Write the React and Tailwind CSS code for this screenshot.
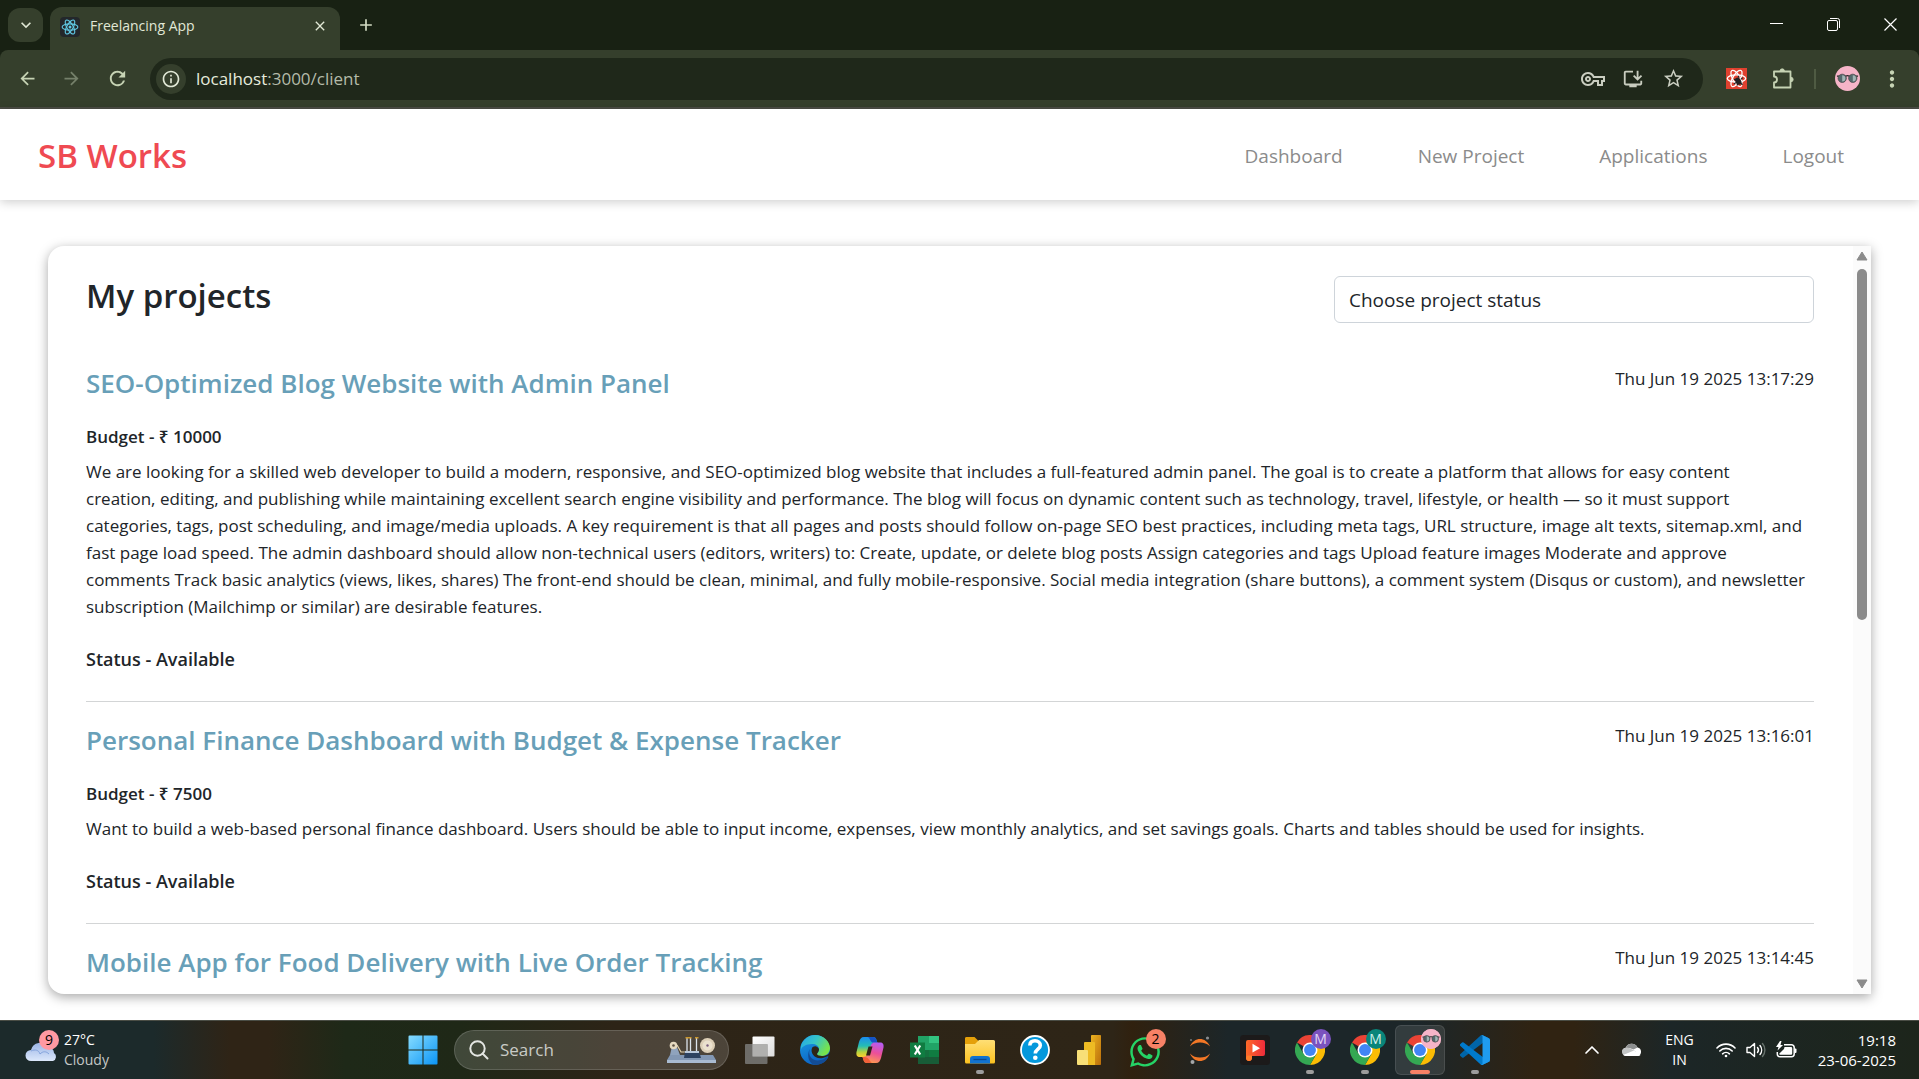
import React from "react";
import {
  MdArrowBack,
  MdArrowForward,
  MdRefresh,
  MdOutlineInfo,
  MdOutlineVpnKey,
  MdOutlineInstallDesktop,
  MdStarBorder,
  MdOutlineExtension,
  MdMoreVert,
  MdAdd,
  MdClose,
  MdKeyboardArrowDown,
} from "react-icons/md";
import { FaWhatsapp } from "react-icons/fa";

const projects = [
  {
    title: "SEO-Optimized Blog Website with Admin Panel",
    date: "Thu Jun 19 2025 13:17:29",
    budget: "10000",
    lines: [
      "We are looking for a skilled web developer to build a modern, responsive, and SEO-optimized blog website that includes a full-featured admin panel. The goal is to create a platform that allows for easy content",
      "creation, editing, and publishing while maintaining excellent search engine visibility and performance. The blog will focus on dynamic content such as technology, travel, lifestyle, or health — so it must support",
      "categories, tags, post scheduling, and image/media uploads. A key requirement is that all pages and posts should follow on-page SEO best practices, including meta tags, URL structure, image alt texts, sitemap.xml, and",
      "fast page load speed. The admin dashboard should allow non-technical users (editors, writers) to: Create, update, or delete blog posts Assign categories and tags Upload feature images Moderate and approve",
      "comments Track basic analytics (views, likes, shares) The front-end should be clean, minimal, and fully mobile-responsive. Social media integration (share buttons), a comment system (Disqus or custom), and newsletter",
      "subscription (Mailchimp or similar) are desirable features.",
    ],
    status: "Available",
  },
  {
    title: "Personal Finance Dashboard with Budget & Expense Tracker",
    date: "Thu Jun 19 2025 13:16:01",
    budget: "7500",
    lines: [
      "Want to build a web-based personal finance dashboard. Users should be able to input income, expenses, view monthly analytics, and set savings goals. Charts and tables should be used for insights.",
    ],
    status: "Available",
  },
  {
    title: "Mobile App for Food Delivery with Live Order Tracking",
    date: "Thu Jun 19 2025 13:14:45",
  },
];

function ReactMark({ className, stroke, width = 1.5 }) {
  return (
    <svg viewBox="0 0 24 24" className={className} fill="none" stroke={stroke} strokeWidth={width}>
      <ellipse cx="12" cy="12" rx="10.5" ry="4.2" />
      <ellipse cx="12" cy="12" rx="10.5" ry="4.2" transform="rotate(60 12 12)" />
      <ellipse cx="12" cy="12" rx="10.5" ry="4.2" transform="rotate(120 12 12)" />
      <circle cx="12" cy="12" r="2" fill={stroke} stroke="none" />
    </svg>
  );
}

function Glasses({ className }) {
  return (
    <svg viewBox="0 0 26 26" className={className}>
      <circle cx="13" cy="13" r="13" fill="#f6b4c8" />
      <path d="M2 10.5h9.500q1.500-1 3 0H24" stroke="#222" strokeWidth="1.300" fill="none" />
      <circle cx="7.500" cy="12.800" r="4.300" fill="#55686c" stroke="#4a4a4a" strokeWidth=".8" />
      <circle cx="18.500" cy="12.800" r="4.300" fill="#55686c" stroke="#4a4a4a" strokeWidth=".8" />
      <path d="M7.500 9.500a3.300 3.300 0 0 1 0 6.600zM18.500 9.500a3.300 3.300 0 0 1 0 6.600z" fill="#a3b5b5" />
    </svg>
  );
}

function TabStrip() {
  return (
    <div className="flex h-[50px] items-end bg-[#182113]">
      <button aria-label="Search tabs" className="mb-2 ml-2 flex h-[34px] w-[35px] shrink-0 items-center justify-center rounded-xl bg-[#353f2c] text-[#dfe6d3]">
        <MdKeyboardArrowDown className="size-5" />
      </button>
      <div className="ml-[7px] flex h-[43px] w-[290px] items-center rounded-t-xl bg-[#353f2c] pr-[10px] pl-[10px]">
        <span className="mb-1 flex size-5 items-center justify-center rounded-sm bg-[#23272b]">
          <ReactMark className="size-[18px]" stroke="#61c9e6" />
        </span>
        <span className="mb-[6px] ml-[10px] flex-1 text-[14px] leading-5 text-[#e1e8d6]">Freelancing App</span>
        <button aria-label="Close tab" className="mb-[6px] flex size-5 items-center justify-center text-[#e1e8d6]">
          <MdClose className="size-4" />
        </button>
      </div>
      <button aria-label="New tab" className="mb-[15px] ml-4 flex size-5 items-center justify-center text-[#d3dcc4]">
        <MdAdd className="size-5" />
      </button>
      <div className="ml-auto flex h-12 text-white self-start">
        <button aria-label="Minimize" className="flex w-[57px] items-center justify-center">
          <svg viewBox="0 0 13 13" className="size-[13px]"><path d="M0 5.500h13" stroke="currentColor" /></svg>
        </button>
        <button aria-label="Restore" className="flex w-[57px] items-center justify-center">
          <svg viewBox="0 0 13 13" className="size-[13px]" fill="none" stroke="currentColor">
            <rect x=".5" y="2.500" width="10" height="10" rx="1.500" />
            <path d="M3 .5h7.500a2 2 0 0 1 2 2V10" />
          </svg>
        </button>
        <button aria-label="Close" className="flex w-[57px] items-center justify-center">
          <svg viewBox="0 0 13 13" className="size-[13px]"><path d="M.5.5l12 12M12.500.5l-12 12" stroke="currentColor" strokeWidth="1.200" /></svg>
        </button>
      </div>
    </div>
  );
}

function Toolbar() {
  return (
    <div className="bg-[#182113]">
      <div className="flex h-[59px] items-center rounded-t-lg border-b-2 border-[#4b4c45] bg-[#353f2c] pr-[15px] pl-[15px] text-[#c6d3b4]">
        <button aria-label="Back" className="flex size-6 items-center justify-center"><MdArrowBack className="size-[21px]" /></button>
        <button aria-label="Forward" className="ml-5 flex size-6 items-center justify-center text-[#75806a]"><MdArrowForward className="size-[21px]" /></button>
        <button aria-label="Reload" className="ml-[22px] flex size-6 items-center justify-center"><MdRefresh className="size-[23px]" /></button>
        <div className="ml-[21px] flex h-[42px] flex-1 items-center rounded-full bg-[#1f281a] pr-[18px] pl-[6px]">
          <button aria-label="View site information" className="flex size-[30px] items-center justify-center rounded-full bg-[#353f2c] text-[#e1e8d6]">
            <MdOutlineInfo className="size-5" />
          </button>
          <span className="ml-[10px] flex-1 text-[17px] leading-6 text-[#b4bba9]">
            <span className="text-[#e6ecdd]">localhost</span>:3000/client
          </span>
          <div className="flex items-center gap-4 text-[#c9cdc0]">
            <button aria-label="Passwords" className="flex size-6 items-center justify-center"><MdOutlineVpnKey className="size-6" /></button>
            <button aria-label="Install app" className="flex size-6 items-center justify-center"><MdOutlineInstallDesktop className="size-[22px]" /></button>
            <button aria-label="Bookmark" className="flex size-6 items-center justify-center"><MdStarBorder className="size-[23px]" /></button>
          </div>
        </div>
        <button aria-label="React Developer Tools" className="ml-[23px] flex size-[21px] items-center justify-center bg-[#e0412f]">
          <svg viewBox="0 0 24 24" className="size-[21px]" fill="none" stroke="#fff" strokeWidth="1.500">
            <ellipse cx="12" cy="12" rx="10.500" ry="4.200" />
            <ellipse cx="12" cy="12" rx="10.500" ry="4.200" transform="rotate(60 12 12)" />
            <ellipse cx="12" cy="12" rx="10.500" ry="4.200" transform="rotate(120 12 12)" />
            <ellipse cx="14" cy="15" rx="3" ry="4.500" fill="#222" stroke="none" transform="rotate(-35 14 15)" />
            <path d="M9 13l4 1M9 18l4-2M13 20v-3M15 11l-1-2M17 13l2-2M16 17l3 2" stroke="#222" strokeWidth="1.500" />
          </svg>
        </button>
        <button aria-label="Extensions" className="ml-6 flex size-6 items-center justify-center">
          <svg viewBox="0 0 21 21" className="size-[21px]" fill="none" stroke="currentColor" strokeWidth="1.800" strokeLinejoin="round">
            <path d="M1 3.500h16.500v16H1v-5a3 3 0 0 0 0-6z" />
            <path d="M7 3a2.200 2.200 0 0 1 4.400 0zM18 9.300a2.200 2.200 0 0 1 0 4.400z" fill="currentColor" strokeWidth=".8" />
          </svg>
        </button>
        <span className="mx-[19px] h-5 w-[2px] bg-[#4f5b43]" />
        <button aria-label="Profile" className="size-[25px]"><Glasses className="size-[25px]" /></button>
        <button aria-label="Menu" className="ml-5 flex size-6 items-center justify-center"><MdMoreVert className="size-[26px] shrink-0" /></button>
      </div>
    </div>
  );
}

function Navbar() {
  return (
    <nav className="relative flex h-[91px] shrink-0 items-center justify-between bg-white pt-[2px] pr-[75px] pl-[38px] shadow-[0_2px_10px_rgba(0,0,0,0.2)]">
      <h3 className="text-[33px] leading-10 font-semibold text-[#ef4a52]">SB Works</h3>
      <div className="flex gap-[75px] text-[19px] leading-7 text-[#8b8b8b]">
        <a href="#dashboard">Dashboard</a>
        <a href="#new-project">New Project</a>
        <a href="#applications">Applications</a>
        <a href="#logout">Logout</a>
      </div>
    </nav>
  );
}

function Project({ project }) {
  return (
    <article className="border-b border-[#d3d5d6] pt-5 pb-7">
      <div className="flex justify-between">
        <h3 className="text-[26px] leading-9 font-semibold text-[#689fb8]">{project.title}</h3>
        <p className="text-[17px] leading-7">{project.date}</p>
      </div>
      {project.lines && (
        <>
          <h5 className="mt-[22px] text-[17px] leading-[27px] font-semibold">Budget - ₹ {project.budget}</h5>
          <p className="mt-2 text-[17px] leading-[27px] whitespace-nowrap">
            {project.lines.map((line) => (
              <React.Fragment key={line}>{line}<br /></React.Fragment>
            ))}
          </p>
          <h5 className="mt-[26px] text-[18px] leading-[27px] font-semibold">Status - {project.status}</h5>
        </>
      )}
    </article>
  );
}

function ProjectsCard() {
  return (
    <section className="flex min-h-0 flex-1 overflow-hidden rounded-l-2xl bg-white shadow-[0_3px_12px_rgba(0,0,0,0.35)]">
      <div className="min-w-0 flex-1 overflow-hidden pr-[39px] pl-[38px]">
        <header className="flex items-start justify-between pt-[30px]">
          <h3 className="text-[33px] leading-10 font-semibold">My projects</h3>
          <select aria-label="Project status" className="h-[47px] w-[480px] appearance-none rounded-md border border-[#ced4da] bg-white px-[14px] text-[19px] leading-7">
            <option>Choose project status</option>
            <option>Available</option>
            <option>Assigned</option>
            <option>Completed</option>
          </select>
        </header>
        <div className="pt-[22px]">
          {projects.map((p) => <Project key={p.title} project={p} />)}
        </div>
      </div>
      <div className="flex w-[18px] flex-col items-center bg-[#fbfbfb] py-[5px]">
        <svg viewBox="0 0 12 10" className="w-3 shrink-0"><path d="M6 1l5 8H1z" fill="#8b8b8b" stroke="#8b8b8b" strokeLinejoin="round" /></svg>
        <div className="my-2 min-h-0 w-full flex-1">
          <div className="mx-auto h-1/2 w-[10px] rounded-full bg-[#8b8b8b]" />
        </div>
        <svg viewBox="0 0 12 10" className="w-3 shrink-0"><path d="M6 9l5-8H1z" fill="#8b8b8b" stroke="#8b8b8b" strokeLinejoin="round" /></svg>
      </div>
    </section>
  );
}

function Chrome() {
  return (
    <svg viewBox="0 0 48 48" className="size-[30px]">
      <path d="M24 24L3.200 12A24 24 0 0 1 44.800 12z" fill="#ea4335" />
      <path d="M24 24V12h20.800A24 24 0 0 1 24 48l10.400-18z" fill="#fbbc04" />
      <path d="M3.200 12L13.600 30 24 24l10.400 6L24 48A24 24 0 0 1 3.200 12z" fill="#34a853" />
      <circle cx="24" cy="24" r="12" fill="#fff" />
      <circle cx="24" cy="24" r="9.500" fill="#4285f4" />
    </svg>
  );
}

function Badge({ className, children }) {
  return <span className={`absolute -top-[6px] -right-[6px] flex size-5 items-center justify-center rounded-full text-[14px] leading-5 ${className}`}>{children}</span>;
}

function TaskIcon({ label, children, running, active }) {
  return (
    <div className="flex w-[55px] shrink-0 justify-center">
      <button
        aria-label={label}
        className={active ? "relative flex size-[50px] items-center justify-center rounded-md border border-white/10 bg-white/10" : "relative flex size-[50px] items-center justify-center"}
      >
        <span className="relative block size-[30px]">{children}</span>
        {running && <span className="absolute bottom-[1px] h-1 w-2 rounded-full bg-[#9c9c9c]" />}
        {active && <span className="absolute bottom-0 h-1 w-5 rounded-full bg-[#f78166]" />}
      </button>
    </div>
  );
}

function SearchArt() {
  return (
    <svg viewBox="0 0 49 27" className="h-[27px] w-[49px]">
      <path d="M3 18h43l3 5v3H0v-3z" fill="#8297b3" />
      <path d="M0 23h49v3H0z" fill="#a9bbd1" />
      <path d="M3 18l2-9 5 1 3 8z" fill="#8fa3bd" />
      <path d="M10 8l4 7h4" stroke="#e3d2ac" strokeWidth="1.200" fill="none" />
      <circle cx="6.500" cy="8.500" r="3.800" fill="#e5d9c0" />
      <circle cx="6.500" cy="8.500" r="1.300" fill="#5d5344" />
      <path d="M20 1v13M23.500 1v13M29.500 1v13" stroke="#dce4ec" strokeWidth="1.300" />
      <path d="M18.500.8h6M28 .8h3.500" stroke="#c8962e" strokeWidth="1.500" />
      <path d="M18 14h14l2 7H17z" fill="#2d4260" />
      <path d="M18 14h14v2H18z" fill="#b9c8da" />
      <circle cx="40.500" cy="8.500" r="7.500" fill="#dccfb7" />
      <circle cx="40.500" cy="8.500" r="5" fill="#ebe1ce" />
      <circle cx="40.500" cy="8.500" r="1.200" fill="#7a5f7f" />
    </svg>
  );
}

function Taskbar() {
  return (
    <footer className="flex h-[59px] shrink-0 items-center border-t border-[#4a4d45] bg-[linear-gradient(90deg,#1c2a2b_0%,#1c2a2b_8%,#2f2416_12%,#2f2416_14%,#1e2918_18%,#1f2817_24%,#2d2417_32%,#2e2517_58%,#30210f_59%,#1c2629_64%,#1c2629_74%,#302312_80%,#302312_82%,#1c2627_87%,#1d251b_100%)] text-white">
      <div className="flex flex-1 items-center pl-[25px]">
        <div className="relative -mt-1 size-[34px]">
          <svg viewBox="0 0 34 34" className="size-[34px]">
            <defs>
              <linearGradient id="cloud" x1="0" y1="0" x2="0" y2="1">
                <stop offset="0" stopColor="#9bb5e6" />
                <stop offset="1" stopColor="#dce8fb" />
              </linearGradient>
            </defs>
            <path d="M6 30a5.500 5.500 0 0 1 0-11 9.500 9.500 0 0 1 17-3 6 6 0 0 1 6 6 4.500 4.500 0 0 1-1 8z" fill="url(#cloud)" />
            <path d="M6 20c4-2 8-1 9 3 3-3 6-3 9 0" stroke="#83a3dc" fill="none" />
          </svg>
          <span className="absolute -top-px right-0 flex size-5 items-center justify-center rounded-full bg-[#ff99a2] text-[14px] leading-5 text-black">9</span>
        </div>
        <div className="ml-[5px] text-[14px] leading-5">
          <p>27°C</p>
          <p className="text-[#c4c7c5]">Cloudy</p>
        </div>
      </div>

      <div className="flex items-center pr-6">
        <TaskIcon label="Start">
          <svg viewBox="0 0 30 30" className="size-[30px]">
            <defs>
              <linearGradient id="win" x1="0" y1="0" x2="1" y2="1">
                <stop offset="0" stopColor="#86dcff" />
                <stop offset="1" stopColor="#0b95f5" />
              </linearGradient>
            </defs>
            <path d="M.5 1.500a1 1 0 0 1 1-1h13V14.500H.5zM15.500.5h13a1 1 0 0 1 1 1v13h-14zM.5 15.500h14v14h-13a1 1 0 0 1-1-1zM15.500 15.500h14v13a1 1 0 0 1-1 1h-13z" fill="url(#win)" />
          </svg>
        </TaskIcon>
        <label className="ml-1 flex h-10 w-[275px] items-center rounded-full border border-white/15 bg-white/15 pr-3 pl-[14px]">
          <svg viewBox="0 0 20 20" className="size-5 shrink-0" fill="none" stroke="#e4e6e2" strokeWidth="2">
            <circle cx="8.500" cy="8.500" r="7.200" />
            <path d="M13.500 13.500l5 5" strokeLinecap="round" />
          </svg>
          <input type="text" aria-label="Search" placeholder="Search" className="ml-[11px] min-w-0 flex-1 bg-transparent text-[17px] leading-6 placeholder:text-[#c9cbc6]" />
          <SearchArt />
        </label>
        <span className="w-[3px]" />
        <TaskIcon label="Task view">
          <svg viewBox="0 0 30 30" className="size-[30px]">
            <defs>
              <linearGradient id="tv" x1="0" y1="0" x2="1" y2="1">
                <stop offset="0" stopColor="#ffffff" />
                <stop offset="1" stopColor="#dcdcdc" />
              </linearGradient>
            </defs>
            <rect x="7.500" y="1.500" width="22" height="20" rx="1" fill="url(#tv)" />
            <rect x="0" y="9" width="22.500" height="20" rx="1" fill="#7a7a78" fillOpacity=".85" />
            <path d="M7.500 9h15v12.500h-15z" fill="#b0b0ae" />
          </svg>
        </TaskIcon>
        <TaskIcon label="Edge">
          <svg viewBox="0 0 30 30" className="size-[30px]">
            <defs>
              <linearGradient id="e1" x1="0" y1="0" x2="1" y2=".5">
                <stop offset="0" stopColor="#25a5e8" />
                <stop offset=".5" stopColor="#35c4c9" />
                <stop offset="1" stopColor="#78e34b" />
              </linearGradient>
              <linearGradient id="e2" x1="0" y1="0" x2=".5" y2="1">
                <stop offset="0" stopColor="#1b9de2" />
                <stop offset="1" stopColor="#0b62c6" />
              </linearGradient>
            </defs>
            <circle cx="15" cy="15" r="15" fill="url(#e2)" />
            <path d="M1 11C3 4 9 0 15 0c9 0 15 7 15 13 0 5-4 8-8 8-3 0-5-1-5-2s2-2 2-5c0-3-3-5-7-5C6 9 1 12 1 15z" fill="url(#e1)" />
            <path d="M10 14c-3 7 3 13 11 11 3-.5 5-2 6.500-4C29 24 23 30 15 30 9 29 6 20 10 14z" fill="#134c95" />
            <path d="M12 13c-2 5 3 12 11 10 4-1 5-2 7-5v-2c0 3-4 5-8 5-3 0-5-1-5-2s2-2 2-5c-2-4-6-3-7-1z" fill="#2e2517" />
            <path d="M27.500 21.500L30 17v5z" fill="#2e2517" />
          </svg>
        </TaskIcon>
        <TaskIcon label="Copilot">
          <svg viewBox="0 0 30 30" className="size-[30px]">
            <defs>
              <linearGradient id="c1" x1=".3" y1="0" x2=".3" y2="1">
                <stop offset="0" stopColor="#1a8cf0" />
                <stop offset=".45" stopColor="#25bdb4" />
                <stop offset=".75" stopColor="#b6d43e" />
                <stop offset="1" stopColor="#ffd02e" />
              </linearGradient>
              <linearGradient id="c2" x1=".7" y1="0" x2=".4" y2="1">
                <stop offset="0" stopColor="#b65cf2" />
                <stop offset=".5" stopColor="#ec4f98" />
                <stop offset="1" stopColor="#ff9c50" />
              </linearGradient>
            </defs>
            <path d="M9 2h9c2 0 3 1 3.500 3l1 3h-5L13 20c-1 1.500-2 2-4 2H5c-3 0-4-2-3.500-5L4 7c1-3 2-5 5-5z" fill="url(#c1)" />
            <path d="M13 2h5c2 0 3 1 3.500 3l1 3h-3c-4 0-4-4-6.500-6z" fill="#1553c4" />
            <path d="M21 28h-9c-2 0-3-1-3.500-3l-1-3 4.500-1 4-11c1-2 2-2.500 4-2.500h5c3 0 4 2 3.500 5L26 23c-1 3-2 5-5 5z" fill="url(#c2)" />
            <path d="M17 28h-5c-2 0-3-1-3.500-3l-1-3h2c4 0 5 4 7.500 6z" fill="#f2613a" />
            <path d="M13.500 11.500h4l-2.500 9h-4z" fill="#2e2517" />
          </svg>
        </TaskIcon>
        <TaskIcon label="Excel">
          <svg viewBox="0 0 30 30" className="size-[30px]">
            <path d="M8 1h21v28H8z" fill="#185c37" />
            <path d="M8 1h11v14H8z" fill="#21a366" />
            <path d="M19 1h10v7H19z" fill="#33c481" />
            <path d="M19 8h10v7H19z" fill="#21a366" />
            <path d="M8 15h11v7H8z" fill="#14703f" />
            <path d="M19 15h10v7H19z" fill="#107c41" />
            <path d="M0 7.500h15v15H0z" fill="#107c41" />
            <path d="M4.800 10.500l5.400 9M10.200 10.500l-5.400 9" stroke="#fff" strokeWidth="2.200" />
          </svg>
        </TaskIcon>
        <TaskIcon label="File Explorer" running>
          <svg viewBox="0 0 30 30" className="size-[30px]">
            <defs>
              <linearGradient id="fe" x1="0" y1="0" x2="0" y2="1">
                <stop offset="0" stopColor="#ffdf75" />
                <stop offset="1" stopColor="#fcc11f" />
              </linearGradient>
            </defs>
            <path d="M0 3a1.500 1.500 0 0 1 1.500-1h8l4 4H28a2 2 0 0 1 2 2v5H0z" fill="#e5a009" />
            <path d="M0 9h10l4-4h14.500A1.500 1.500 0 0 1 30 6.500V27a1.500 1.500 0 0 1-1.500 1.500h-27A1.500 1.500 0 0 1 0 27z" fill="url(#fe)" />
            <path d="M5 28.500V24a3 3 0 0 1 3-3h14a3 3 0 0 1 3 3v4.500z" fill="#1273cf" />
            <path d="M8.500 24.500h13" stroke="#0b4a91" strokeWidth="1.300" />
          </svg>
        </TaskIcon>
        <TaskIcon label="Get Help">
          <svg viewBox="0 0 30 30" className="size-[30px]" fill="none">
            <circle cx="15" cy="15" r="14" fill="#0498dc" stroke="#fff" strokeWidth="1.800" />
            <path d="M9.800 10.500C10 7.200 12.200 5.800 15 5.800c3 0 5.300 1.700 5.300 4.600 0 3.600-5 4-5 8.100" stroke="#fff" strokeWidth="3.600" />
            <circle cx="15.300" cy="22.800" r="2.300" fill="#fff" />
          </svg>
        </TaskIcon>
        <TaskIcon label="Power BI">
          <svg viewBox="0 0 30 30" className="size-[30px]">
            <defs>
              <linearGradient id="pb" x1="0" y1="0" x2="1" y2="1">
                <stop offset="0" stopColor="#ecb321" />
                <stop offset="1" stopColor="#ba6d0a" />
              </linearGradient>
            </defs>
            <rect x="16" y="0" width="10" height="30" rx=".8" fill="url(#pb)" />
            <path d="M9 8a1 1 0 0 1 1-1h9a1 1 0 0 1 1 1v22H9z" fill="#eebb23" />
            <path d="M2 16a1 1 0 0 1 1-1h9a1 1 0 0 1 1 1v14H3a1 1 0 0 1-1-1z" fill="#f8df77" />
          </svg>
        </TaskIcon>
        <TaskIcon label="WhatsApp">
          <FaWhatsapp className="-mx-[2px] size-[34px] text-[#25d366]" />
          <Badge className="bg-[#f78166] text-black">2</Badge>
        </TaskIcon>
        <TaskIcon label="Jupyter">
          <svg viewBox="0 0 30 30" className="size-[30px]">
            <path d="M5 11.500C7 6.500 11 4 15 4s8 2.500 10 7.500C22 8.500 19 7.500 15 7.500S8 8.500 5 11.500zM5 18.500c2 5 6 7.500 10 7.500s8-2.500 10-7.500c-3 3-6 4-10 4s-7-1-10-4z" fill="#f37726" />
            <circle cx="22.500" cy="3" r="1.600" fill="#8a8c8e" />
            <circle cx="7.500" cy="27" r="2" fill="#a5a7a9" />
            <circle cx="6" cy="5" r="1.100" fill="#6f7173" />
          </svg>
        </TaskIcon>
        <TaskIcon label="Video player">
          <svg viewBox="0 0 30 30" className="size-[30px]">
            <defs>
              <linearGradient id="vp" x1="0" y1="0" x2="1" y2="0">
                <stop offset="0" stopColor="#ff6a28" />
                <stop offset="1" stopColor="#ef2b3b" />
              </linearGradient>
            </defs>
            <rect width="30" height="30" rx="3.500" fill="#1c1a1a" />
            <path d="M6 7a2 2 0 0 1 2-2h15a2 2 0 0 1 2 2v12a2 2 0 0 1-2 2H12v2c0 2-1.500 3-3 3s-3-1-3-3z" fill="url(#vp)" />
            <path d="M12 20.500v2.500c0 2-1.500 3-3 3s-3-1-3-3 1.500-2.500 3-2.500z" fill="#ff7d2a" />
            <path d="M12.500 8.800l7.500 4.400-7.500 4.400z" fill="#fff" />
          </svg>
        </TaskIcon>
        <TaskIcon label="Chrome, profile one" running>
          <Chrome />
          <Badge className="bg-[#7a52be] text-[#e3d7f7]">M</Badge>
        </TaskIcon>
        <TaskIcon label="Chrome, profile two" running>
          <Chrome />
          <Badge className="bg-[#09857a] text-[#d1efeb]">M</Badge>
        </TaskIcon>
        <TaskIcon label="Chrome, profile three" active>
          <Chrome />
          <Badge className="bg-[#f6b4c8]"><Glasses className="size-5" /></Badge>
        </TaskIcon>
        <TaskIcon label="Visual Studio Code" running>
          <svg viewBox="0 0 100 100" className="size-[30px]">
            <path d="M96.500 10.700L75.900.8a6.200 6.200 0 0 0-7.100 1.200L1.300 63.500a4.200 4.200 0 0 0 0 6.200l5.500 5a4.200 4.200 0 0 0 5.300.2L93.400 13.300c2.700-2 6.600-.1 6.600 3.300v-.2a6.300 6.300 0 0 0-3.500-5.700z" fill="#0065a9" />
            <path d="M96.500 89.300l-20.600 9.900a6.200 6.200 0 0 1-7.100-1.200L1.300 36.500a4.200 4.200 0 0 1 0-6.200l5.500-5a4.200 4.200 0 0 1 5.300-.2l81.300 61.600c2.700 2 6.600.1 6.600-3.300v.2a6.300 6.300 0 0 1-3.500 5.700z" fill="#007acc" />
            <path d="M75.900 99.200a6.200 6.200 0 0 1-7.100-1.200c2.300 2.300 6.200.7 6.200-2.600V4.700c0-3.300-3.900-5-6.200-2.600a6.200 6.200 0 0 1 7.100-1.300l20.600 9.900a6.300 6.300 0 0 1 3.500 5.700v67.300c0 2.400-1.400 4.600-3.500 5.600z" fill="#1f9cf0" />
          </svg>
        </TaskIcon>
      </div>

      <div className="flex flex-1 items-center justify-end pr-[23px]">
        <button aria-label="Show hidden icons" className="size-4">
          <svg viewBox="0 0 16 16" className="size-4" fill="none" stroke="#fff" strokeWidth="1.700"><path d="M2 11l6-6 6 6" strokeLinecap="round" strokeLinejoin="round" /></svg>
        </button>
        <button aria-label="OneDrive" className="ml-[22px] h-[14px] w-5">
          <svg viewBox="0 0 20 14" className="h-[14px] w-5">
            <path d="M4.500 13a4.200 4.200 0 0 1-.8-8.300A6.500 6.500 0 0 1 15.500 4.500 4.400 4.400 0 0 1 16 13z" fill="#fff" />
            <path d="M3.700 4.700A6.500 6.500 0 0 1 15.500 4.500l-4 2L7.500 5z" fill="#8d8f8f" />
            <path d="M0 9a4.200 4.200 0 0 1 3.700-4.300l3.500.2 7 3.600L1.200 12z" fill="#c2c4c4" />
            <path d="M1.200 12L12 7.500l6.500 4.500q-1 1-2.500 1H4.500q-2 0-3.300-1z" fill="#fff" />
          </svg>
        </button>
        <div className="ml-[23px] text-center text-[14px] leading-5">
          <p>ENG</p>
          <p>IN</p>
        </div>
        <button aria-label="Network, sound and battery" className="ml-[22px] flex items-center gap-[10px]">
          <svg viewBox="0 0 20 16" className="h-4 w-5" fill="none" stroke="#fff" strokeWidth="1.600" strokeLinecap="round">
            <path d="M1 6a12.500 12.500 0 0 1 18 0" />
            <path d="M3.800 9a8.700 8.700 0 0 1 12.400 0" />
            <path d="M6.600 11.800a4.900 4.900 0 0 1 6.800 0" />
            <circle cx="10" cy="14" r="1.300" fill="#fff" stroke="none" />
          </svg>
          <svg viewBox="0 0 20 18" className="h-[18px] w-5" fill="none" stroke="#fff" strokeWidth="1.400" strokeLinecap="round">
            <path d="M1 6.500h3L8.500 2.500v13L4 11.500H1z" strokeLinejoin="round" />
            <path d="M11.500 6.500a4 4 0 0 1 0 5M14 4.500a7 7 0 0 1 0 9" />
            <path d="M16.500 2.500a10 10 0 0 1 0 13" stroke="#66706b" />
          </svg>
          <svg viewBox="0 0 21 18" className="h-[18px] w-[21px]" fill="none" stroke="#fff" strokeWidth="1.500">
            <path d="M8 3.800h7.500a2.700 2.700 0 0 1 2.700 2.700v6.500a2.700 2.700 0 0 1-2.700 2.700H4a2.700 2.700 0 0 1-2.700-2.700V11" />
            <path d="M8.500 6h6.500q1.200 0 1.200 1.200v5.300q0 1.200-1.200 1.200H4.200q-1 0-1-1L8 8z" fill="#fff" stroke="none" />
            <path d="M19 7.500h.5q1 0 1 1V11q0 1-1 1H19z" fill="#fff" stroke="none" />
            <path d="M4 0L0 6h2.500L1.500 9.500 7 4H4.500L5.500 0z" fill="#fff" stroke="none" />
          </svg>
        </button>
        <div className="ml-[21px] text-right text-[15px] leading-5">
          <p>19:18</p>
          <p>23-06-2025</p>
        </div>
      </div>
    </footer>
  );
}

export default function App() {
  return (
    <div className="flex h-screen flex-col overflow-hidden bg-white font-['Open_Sans','Noto_Sans',sans-serif] text-[#212529]">
      <TabStrip />
      <Toolbar />
      <Navbar />
      <main className="flex min-h-0 flex-1 flex-col pt-[46px] pr-12 pb-[26px] pl-12">
        <ProjectsCard />
      </main>
      <Taskbar />
    </div>
  );
}
